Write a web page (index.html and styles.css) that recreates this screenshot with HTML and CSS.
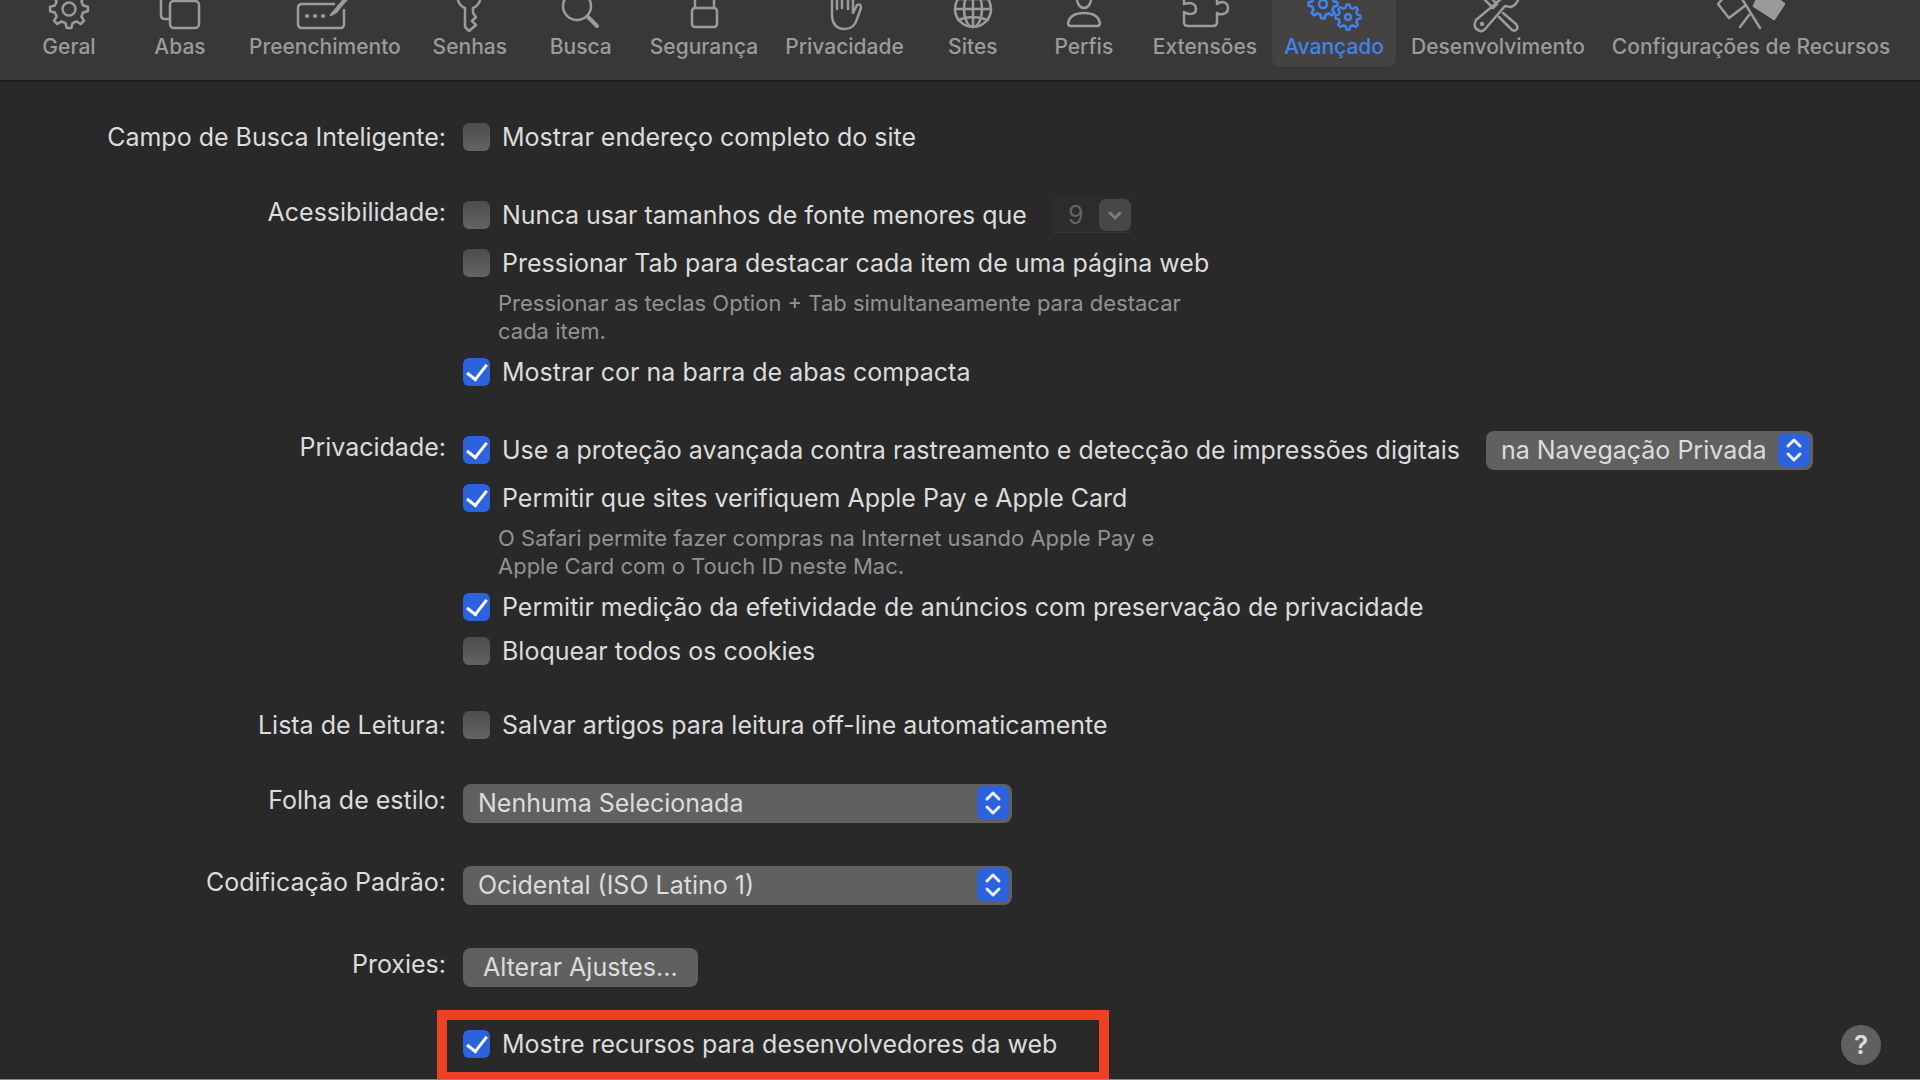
FILE: index.html
```html
<!DOCTYPE html>
<html lang="pt-BR">
<head>
    <meta charset="UTF-8">
    <meta name="viewport" content="width=device-width, initial-scale=1.0">
    <title>Avançado</title>
    <link rel="stylesheet" href="styles.css">
</head>
<body>
    <nav class="toolbar">
        <button class="tab">
            <svg class="icon" viewBox="-34 0 68 34">
                <g transform="translate(0 9)">
                    <path id="gear" d="M-2.3 18.9H2.3L3.5 14.1 7.5 12.4 11.7 15 15 11.7 12.4 7.5 14.1 3.5 18.9 2.3V-2.3L14.1-3.5 12.4-7.5 15-11.7 11.7-15 7.5-12.4 3.5-14.1 2.3-18.9H-2.3L-3.5-14.1-7.5-12.4-11.7-15-15-11.7-12.4-7.5-14.1-3.5-18.9-2.3V2.3L-14.1 3.5-12.4 7.5-15 11.7-11.7 15-7.5 12.4-3.5 14.1Z"/>
                    <circle r="6.5"/>
                </g>
            </svg>
            Geral
        </button>
        <button class="tab">
            <svg class="icon" viewBox="-34 0 68 34">
                <rect x="-10" y="1" width="29" height="27" rx="4"/>
                <path d="M-11 19H-15Q-19 19-19 15V-6"/>
            </svg>
            Abas
        </button>
        <button class="tab">
            <svg class="icon" viewBox="-34 0 68 34">
                <path d="M9 4H-23Q-27 4-27 8V24Q-27 28-23 28H15Q19 28 19 24V10"/>
                <path d="M6 15 23-5M6 15 11 12 26-6"/>
                <path class="dots" d="M-18 16h.1M-10 16h.1M-2 16h.1"/>
            </svg>
            Preenchimento
        </button>
        <button class="tab">
            <svg class="icon" viewBox="-34 0 68 34">
                <path d="M-13-4Q-12 5-5 8V27L-1 31 6 25 2 21 6 17 3 13V8Q10 5 11-4"/>
            </svg>
            Senhas
        </button>
        <button class="tab">
            <svg class="icon" viewBox="-34 0 68 34">
                <circle cx="-4" cy="6" r="14"/>
                <path class="thick" d="M7 17 16 26"/>
            </svg>
            Busca
        </button>
        <button class="tab">
            <svg class="icon" viewBox="-34 0 68 34">
                <rect x="-12" y="8" width="25" height="19" rx="3"/>
                <path d="M-9 8V-4M10 8V-4"/>
            </svg>
            Segurança
        </button>
        <button class="tab">
            <svg class="icon" viewBox="-34 0 68 34">
                <path d="M-13-4V14Q-13 29 0 29Q9 29 12 19L16 8Q16 3 12 5L8 13V-4M-8-4V9M-3-4V8M3-4V9"/>
            </svg>
            Privacidade
        </button>
        <button class="tab">
            <svg class="icon" viewBox="-34 0 68 34">
                <circle cx="0" cy="9" r="18"/>
                <ellipse cx="0" cy="9" rx="9" ry="18"/>
                <path d="M0-9V27M-18 9H18M-15-1H15M-15 20Q0 14 15 20"/>
            </svg>
            Sites
        </button>
        <button class="tab">
            <svg class="icon" viewBox="-34 0 68 34">
                <ellipse cx="0" cy="-1" rx="7" ry="9"/>
                <path d="M-13 26Q-16 26-16 23Q-14 13 0 13Q14 13 16 23Q16 26 13 26Z"/>
            </svg>
            Perfis
        </button>
        <button class="tab">
            <svg class="icon" viewBox="-34 0 68 34">
                <path d="M-21-4V4Q-18 3-15 3Q-9 4-9 9Q-9 14-15 14Q-18 14-21 12V22Q-21 26-17 26H8Q12 26 12 22V13Q14 15 18 14Q23 13 23 8Q23 3 18 2Q14 2 12 4V-4"/>
            </svg>
            Extensões
        </button>
        <button class="tab active">
            <svg class="icon" viewBox="-34 0 68 34">
                <use class="cog" href="#gear" transform="translate(-11 4) scale(.76)"/>
                <circle cx="-11" cy="4" r="4"/>
                <use class="cog" href="#gear" transform="translate(14 17) scale(.66)"/>
                <circle cx="14" cy="17" r="3"/>
            </svg>
            Avançado
        </button>
        <button class="tab">
            <svg class="icon" viewBox="-34 0 68 34">
                <path d="M-17-4-5 8-1 4-9-4M5 13 18 24Q21 28 18 30Q15 32 12 28L1 17M-18 31Q-26 28-22 20L3-1Q1-5 4-8M20-6Q22 3 13 7L7 6-12 28Q-15 32-18 31"/>
                <circle cx="-16" cy="24" r="1"/>
            </svg>
            Desenvolvimento
        </button>
        <button class="tab">
            <svg class="icon" viewBox="-34 0 68 34">
                <path d="M-24-6-33 4-22 18-5 5M-12-6 9 28M-2 15-11 27"/>
                <path class="solid" d="M8-5 3 6 23 19 33 4 20-6Z"/>
            </svg>
            Configurações de Recursos
        </button>
    </nav>

    <form class="settings">
        <div class="name centered">Campo de Busca Inteligente:</div>
        <div class="options">
            <label class="option"><input type="checkbox">Mostrar endereço completo do site</label>
        </div>

        <div class="name">Acessibilidade:</div>
        <div class="options">
            <div class="line">
                <label class="option"><input type="checkbox">Nunca usar tamanhos de fonte menores que</label>
                <div class="combo">
                    <select aria-label="Tamanho mínimo da fonte" disabled>
                        <option>9</option>
                    </select>
                    <svg class="arrow" viewBox="0 0 32 32"><path d="M11 14 16 19 21 14"/></svg>
                </div>
            </div>
            <label class="option"><input type="checkbox">Pressionar Tab para destacar cada item de uma página web</label>
            <p class="hint">Pressionar as teclas Option + Tab simultaneamente para destacar<br>cada item.</p>
            <label class="option"><input type="checkbox" checked>Mostrar cor na barra de abas compacta</label>
        </div>

        <div class="name">Privacidade:</div>
        <div class="options">
            <div class="line">
                <label class="option"><input type="checkbox" checked>Use a proteção avançada contra rastreamento e detecção de impressões digitais</label>
                <div class="popup small">
                    <select aria-label="Proteção avançada">
                        <option>na Navegação Privada</option>
                    </select>
                    <svg class="arrow" viewBox="0 0 32 34"><path d="M10 13 16 7 22 13M10 21 16 27 22 21"/></svg>
                </div>
            </div>
            <label class="option"><input type="checkbox" checked>Permitir que sites verifiquem Apple Pay e Apple Card</label>
            <p class="hint">O Safari permite fazer compras na Internet usando Apple Pay e<br>Apple Card com o Touch ID neste Mac.</p>
            <label class="option"><input type="checkbox" checked>Permitir medição da efetividade de anúncios com preservação de privacidade</label>
            <label class="option tight"><input type="checkbox">Bloquear todos os cookies</label>
        </div>

        <div class="name centered">Lista de Leitura:</div>
        <div class="options">
            <label class="option"><input type="checkbox">Salvar artigos para leitura off-line automaticamente</label>
        </div>

        <label class="name" for="estilo">Folha de estilo:</label>
        <div class="options">
            <div class="line">
                <div class="popup">
                    <select id="estilo">
                        <option>Nenhuma Selecionada</option>
                    </select>
                    <svg class="arrow" viewBox="0 0 32 34"><path d="M10 13 16 7 22 13M10 21 16 27 22 21"/></svg>
                </div>
            </div>
        </div>

        <label class="name spaced" for="codificacao">Codificação Padrão:</label>
        <div class="options spaced">
            <div class="line">
                <div class="popup">
                    <select id="codificacao">
                        <option>Ocidental (ISO Latino 1)</option>
                    </select>
                    <svg class="arrow" viewBox="0 0 32 34"><path d="M10 13 16 7 22 13M10 21 16 27 22 21"/></svg>
                </div>
            </div>
        </div>

        <label class="name spaced" for="proxies">Proxies:</label>
        <div class="options spaced">
            <div class="line">
                <button class="push" id="proxies" type="button">Alterar Ajustes...</button>
            </div>
        </div>

        <div class="footer">
            <div class="highlight">
                <label class="option"><input type="checkbox" checked>Mostre recursos para desenvolvedores da web</label>
            </div>
            <button class="help" type="button" aria-label="Ajuda">?</button>
        </div>
    </form>
</body>
</html>
```

FILE: styles.css
```css
* { box-sizing: border-box; }
body { margin: 0; min-height: 100vh; background: #292929; color: #dcdcdc; font-family: Inter, "Liberation Sans", sans-serif; font-size: 25px; border-bottom: 1px solid #8a8a8a; }
button, select { font: inherit; color: inherit; border: none; }

/* toolbar */
.toolbar { display: flex; gap: 3px; height: 82px; padding-left: 15px; background: #383838; border-bottom: 2px solid #1e1e1e; overflow: hidden; }
.tab { display: flex; flex-direction: column; align-items: center; min-width: 108px; height: 67px; padding: 0 12px; background: none; color: #9b9b9b; font-size: 21px; font-weight: 500; line-height: 26px; white-space: nowrap; border-radius: 0 0 8px 8px; }
.tab.active { background: #444342; color: #3f83ee; }
.icon { width: 68px; height: 34px; flex: none; fill: none; stroke: currentColor; stroke-width: 2.5; stroke-linejoin: round; stroke-linecap: round; }
.icon .thick { stroke-width: 4; }
.icon .dots { stroke-width: 4; }
.icon .cog { stroke-width: 3.5; }
.icon .solid { fill: currentColor; }

/* settings form */
.settings { display: grid; grid-template-columns: 446px 1fr; column-gap: 17px; padding-top: 31px; }
.name { text-align: right; line-height: 42px; }
.name.centered { line-height: 48px; }
.options { display: flex; flex-direction: column; align-items: flex-start; margin-bottom: 30px; }
.spaced { margin-top: 4px; }
.line { display: flex; align-items: center; height: 48px; gap: 26px; }
.option { display: flex; align-items: center; gap: 12px; height: 48px; white-space: nowrap; }
.option.tight { height: 40px; }
.hint { margin: 2px 0 3px 35px; color: #929292; font-size: 22px; line-height: 28px; }

input[type="checkbox"] { appearance: none; width: 27px; height: 28px; margin: 0; border-radius: 6px; background: linear-gradient(#4c4c4c, #646464); display: grid; place-items: center; }
input[type="checkbox"]:checked { background: #2c62dc; }
input[type="checkbox"]:checked::before { content: ""; width: 9px; height: 17px; margin-bottom: 4px; border: solid #fff; border-width: 0 3px 3px 0; transform: rotate(38deg); }

.popup, .combo { display: grid; align-items: center; }
.popup { width: 549px; height: 39px; background: #606060; border-radius: 8px; }
.popup.small { width: 327px; }
.popup select, .combo select { grid-area: 1 / 1; appearance: none; width: 100%; height: 100%; padding: 0 40px 0 15px; background: none; opacity: 1; }
.arrow { grid-area: 1 / 1; justify-self: end; width: 32px; height: 34px; margin-right: 3px; border-radius: 7px; background: #2c62dc; fill: none; stroke: #e8eefc; stroke-width: 3; stroke-linecap: round; stroke-linejoin: round; pointer-events: none; }
.combo { width: 78px; height: 36px; background: #2c2c2c; border-bottom: 1px solid #363636; }
.combo select { color: #646464; }
.combo .arrow { height: 32px; margin-right: 0; background: #474747; stroke: #7a7a7a; }
.push { height: 39px; padding: 0 20px; background: #606060; border-radius: 8px; }

.footer { grid-column: 1 / -1; display: flex; align-items: center; justify-content: space-between; margin-top: -11px; padding: 0 39px 0 437px; }
.highlight { width: 672px; height: 69px; padding: 0 16px; border: solid #ee4023; border-width: 10px 10px 7px; }
.help { width: 40px; height: 40px; padding: 0; border-radius: 50%; background: #606060; font-size: 26px; font-weight: 600; }
```
